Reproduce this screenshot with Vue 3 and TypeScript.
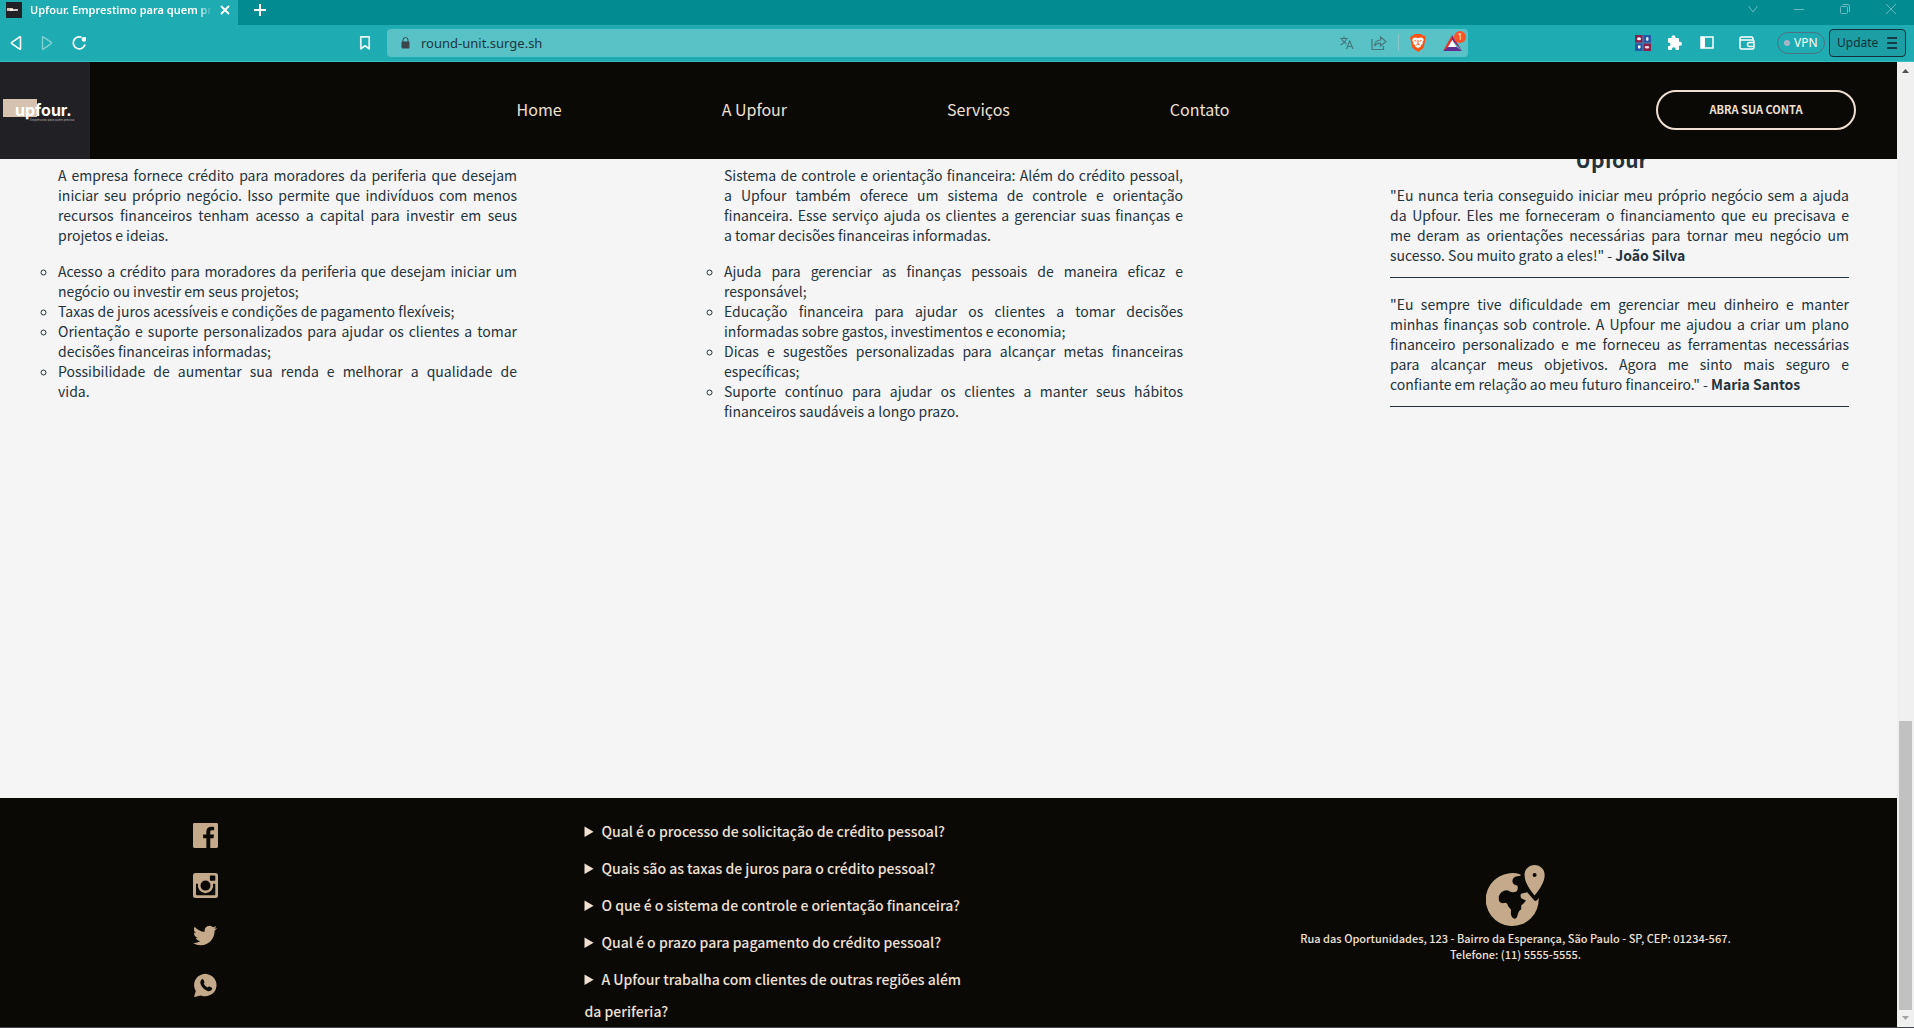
<script setup lang="ts">
const navLinks: string[] = ['Home', 'A Upfour', 'Serviços', 'Contato']

interface Service {
  intro: string
  items: string[]
}

// A "\n" marks a fixed line break; the line before it stays justified.
const services: Service[] = [
  {
    intro:
      'A empresa fornece crédito para moradores da periferia que desejam iniciar seu próprio negócio. Isso permite que indivíduos com menos recursos financeiros tenham acesso a capital para investir em seus projetos e ideias.',
    items: [
      'Acesso a crédito para moradores da periferia que desejam iniciar um negócio ou investir em seus projetos;',
      'Taxas de juros acessíveis e condições de pagamento flexíveis;',
      'Orientação e suporte personalizados para ajudar os clientes a tomar decisões financeiras informadas;',
      'Possibilidade de aumentar sua renda e melhorar a qualidade de\nvida.',
    ],
  },
  {
    intro:
      'Sistema de controle e orientação financeira: Além do crédito pessoal, a Upfour também oferece um sistema de controle e orientação financeira. Esse serviço ajuda os clientes a gerenciar suas finanças e\na tomar decisões financeiras informadas.',
    items: [
      'Ajuda para gerenciar as finanças pessoais de maneira eficaz e responsável;',
      'Educação financeira para ajudar os clientes a tomar decisões informadas sobre gastos, investimentos e economia;',
      'Dicas e sugestões personalizadas para alcançar metas financeiras específicas;',
      'Suporte contínuo para ajudar os clientes a manter seus hábitos financeiros saudáveis a longo prazo.',
    ],
  },
]

const testimonials = [
  {
    quote:
      '"Eu nunca teria conseguido iniciar meu próprio negócio sem a ajuda da Upfour. Eles me forneceram o financiamento que eu precisava e\nme deram as orientações necessárias para tornar meu negócio um sucesso. Sou muito grato a eles!"',
    author: 'João Silva',
  },
  {
    quote:
      '"Eu sempre tive dificuldade em gerenciar meu dinheiro e manter minhas finanças sob controle. A Upfour me ajudou a criar um plano financeiro personalizado e me forneceu as ferramentas necessárias para alcançar meus objetivos. Agora me sinto mais seguro e\nconfiante em relação ao meu futuro financeiro."',
    author: 'Maria Santos',
  },
]

const questions: string[] = [
  'Qual é o processo de solicitação de crédito pessoal?',
  'Quais são as taxas de juros para o crédito pessoal?',
  'O que é o sistema de controle e orientação financeira?',
  'Qual é o prazo para pagamento do crédito pessoal?',
  'A Upfour trabalha com clientes de outras regiões além da periferia?',
]

const lines = (text: string): string[] => text.split('\n')
</script>

<template>
  <div class="window">
    <div class="tabstrip">
      <div class="tab">
        <svg class="favicon" width="16" height="16" viewBox="0 0 16 16" aria-hidden="true">
          <rect width="16" height="16" fill="#212025" />
          <rect x="1" y="6" width="6" height="3" fill="#d9c6b2" />
          <path d="M4 8h8" stroke="#fff" stroke-width="1.500" />
        </svg>
        <span class="tab-title">Upfour. Emprestimo para quem precisa</span>
        <button class="icon-btn" aria-label="Fechar guia">
          <svg width="10" height="10" viewBox="0 0 10 10"><path d="M1 1l8 8M9 1l-8 8" stroke="#fff" stroke-width="1.800" /></svg>
        </button>
      </div>
      <button class="icon-btn new-tab" aria-label="Nova guia">
        <svg width="12" height="12" viewBox="0 0 12 12"><path d="M6 0v12M0 6h12" stroke="#fff" stroke-width="2" /></svg>
      </button>
      <div class="window-buttons">
        <button class="icon-btn" aria-label="Pesquisar guias">
          <svg width="10" height="10" viewBox="0 0 10 10"><path d="M.5 2L5 8l4.500-6" fill="none" stroke="#66bcc0" /></svg>
        </button>
        <button class="icon-btn" aria-label="Minimizar">
          <svg width="10" height="10" viewBox="0 0 10 10"><path d="M0 5.500h10" stroke="#66bcc0" /></svg>
        </button>
        <button class="icon-btn" aria-label="Restaurar">
          <svg width="10" height="10" viewBox="0 0 10 10" fill="none" stroke="#66bcc0"><rect x=".5" y="2.500" width="7" height="7" rx="1" /><path d="M2.500.5H8q1.500 0 1.500 1.500v6" /></svg>
        </button>
        <button class="icon-btn" aria-label="Fechar">
          <svg width="10" height="10" viewBox="0 0 10 10"><path d="M0 0l10 10M10 0L0 10" stroke="#66bcc0" /></svg>
        </button>
      </div>
    </div>

    <div class="toolbar">
      <div class="history">
        <button class="icon-btn" aria-label="Voltar">
          <svg width="14" height="16" viewBox="0 0 14 16"><path d="M11.500 2.200v11.600q0 .8-.8.3L2.800 8.600q-.8-.6 0-1.200l7.900-5.500q.8-.5.8.3z" fill="none" stroke="#fff" stroke-width="1.600" /></svg>
        </button>
        <button class="icon-btn" aria-label="Avançar">
          <svg width="14" height="16" viewBox="0 0 14 16"><path d="M2.500 2.200v11.600q0 .8.8.3l7.900-5.500q.8-.6 0-1.200L3.300 1.900q-.8-.5-.8.3z" fill="none" stroke="#7fd0d3" stroke-width="1.400" /></svg>
        </button>
        <button class="icon-btn" aria-label="Recarregar">
          <svg width="16" height="16" viewBox="0 0 16 16"><path d="M10.600 2.300A6 6 0 1 0 14 9.500" fill="none" stroke="#fff" stroke-width="1.700" /><path d="M11 3l3.500-.5v3.500h-3z" fill="#fff" stroke="#fff" stroke-linejoin="round" /></svg>
        </button>
      </div>
      <button class="icon-btn bookmark" aria-label="Favoritos">
        <svg width="12" height="16" viewBox="0 0 12 16"><path d="M1.800 1.800h8.400v12L6 10.800l-4.200 3z" fill="none" stroke="#e4f6f6" stroke-width="1.700" stroke-linejoin="round" /></svg>
      </button>
      <div class="address">
        <svg width="9" height="12" viewBox="0 0 9 12" aria-hidden="true"><path d="M2 5V3a2.500 2.500 0 0 1 5 0v2" fill="none" stroke="#3c474b" /><rect x=".5" y="4.500" width="8" height="7" rx="1" fill="#3c474b" /></svg>
        <input class="url" type="text" value="round-unit.surge.sh" aria-label="Endereço" />
        <button class="icon-btn" aria-label="Traduzir">
          <svg width="14" height="14" viewBox="0 0 14 14" fill="none" stroke="#44777b" stroke-width="1.100"><path d="M0 2.500h8M4 .5v2M1.500 2.500Q3 6.500 6.500 8M6.500 2.500Q5 7 .5 9M6.500 13l3.200-8 3.300 8M7.600 10.500h4.300" /></svg>
        </button>
        <button class="icon-btn" aria-label="Compartilhar">
          <svg width="16" height="16" viewBox="0 0 16 16" fill="none" stroke="#44777b" stroke-width="1.200"><path d="M1 4v10.500h11.500V11M3.500 11Q4 5.500 9.500 5V2L15 6.500 9.500 11V8Q5.500 8 3.500 11z" /></svg>
        </button>
        <span class="divider"></span>
        <button class="icon-btn" aria-label="Escudos">
          <svg width="16" height="18" viewBox="0 0 16 18"><path d="M4.500 0h7l1.500 1.700 1.500-.2L16 4l-.6 1.700L13.500 14 8 18l-5.500-4L.6 5.700 0 4l1.500-2.500 1.500.2z" fill="#fb5411" /><path d="M3.200 4l2-.6L8 4l2.800-.6 2 .6 1 2-1.300 2.500.2 1.500-2 1.300.3 1L8 14.200l-3-1.900.3-1-2-1.300.2-1.500L2.200 6z" fill="#fff" /><path d="M4.500 6.500l2 .7M11.500 6.500l-2 .7M8 6v4M6.300 11L8 10l1.700 1" stroke="#fb5411" fill="none" /></svg>
        </button>
        <button class="icon-btn rewards" aria-label="Recompensas">
          <svg width="19" height="16" viewBox="0 0 19 16"><path d="M9 0L0 16l9-5.500z" fill="#e0392b" /><path d="M9 0l10 16L9 5z" fill="#9e1f63" /><path d="M0 16h19l-6-4.500H6z" fill="#5e2f91" /><path d="M9.200 5l4.200 7H5z" fill="#fff" /></svg>
          <span class="badge">1</span>
        </button>
      </div>
      <div class="extensions">
        <button class="icon-btn ext-grid" aria-label="Extensão">
          <svg width="16" height="16" viewBox="0 0 16 16"><path d="M0 0h8v8H0z" fill="#87224f" /><path d="M8 0h8v8H8z" fill="#2459a5" /><path d="M0 8h8v8H0z" fill="#2459a5" /><path d="M8 8h8v8H8z" fill="#87224f" /><path d="M8 0v16M0 8h16" stroke="#4a86b0" /><ellipse cx="4" cy="3.800" rx="2" ry="1.500" fill="#fff" /><ellipse cx="12.300" cy="4" rx="1.300" ry="2" fill="#dfe9f4" /><path d="M3 10.500h2.500v2L4 14l-1-1.500z" fill="#fff" /><ellipse cx="12" cy="12.200" rx="2.300" ry="1.200" fill="#f3dce6" /></svg>
        </button>
        <button class="icon-btn ext-puzzle" aria-label="Extensões">
          <svg width="15" height="15" viewBox="0 0 15 15"><path d="M1 4q0-1 1-1h2.500v-.8a2 2 0 0 1 4 0V3H11q1 0 1 1v2.800h1a2 2 0 0 1 0 4h-1V14q0 1-1 1H8.700v-.8a1.900 1.900 0 0 0-3.800 0v.8H2q-1 0-1-1v-2.800h.6a1.900 1.900 0 0 0 0-3.800H1z" fill="#fff" /></svg>
        </button>
        <button class="icon-btn ext-panel" aria-label="Painel lateral">
          <svg width="14" height="13" viewBox="0 0 14 13"><rect x="1" y="1" width="12" height="11" fill="none" stroke="#fff" stroke-width="1.500" /><path d="M1 1h4v11H1z" fill="#fff" /></svg>
        </button>
        <button class="icon-btn ext-wallet" aria-label="Carteira">
          <svg width="16" height="14" viewBox="0 0 16 14" fill="none" stroke="#fff" stroke-width="1.500"><path d="M14 4V2.500Q14 1 12.500 1h-10Q1 1 1 2.500v9Q1 13 2.500 13h10.800q1.700 0 1.700-1.500v-6Q15 4 13.500 4H1" /><path d="M15 6.500h-4.500a2 2 0 0 0 0 4H15" /></svg>
        </button>
        <button class="vpn"><span class="vpn-dot"></span>VPN</button>
        <button class="update">
          Update
          <svg width="10" height="12" viewBox="0 0 10 12"><path d="M0 1h10M0 6h10M0 11h10" stroke="#143c46" stroke-width="2" /></svg>
        </button>
      </div>
    </div>

    <div class="viewport">
      <div class="page">
        <header class="site-header">
          <a class="logo" href="#" aria-label="upfour.">
            <svg width="90" height="97" viewBox="0 0 90 97">
              <rect x="3" y="37" width="34" height="18" fill="#d5c3b0" />
              <text x="15" y="54" class="logo-name">upfour.</text>
              <text x="30" y="59" class="logo-tag">Empréstimo para quem precisa</text>
            </svg>
          </a>
          <nav class="nav">
            <a v-for="link in navLinks" :key="link" href="#">{{ link }}</a>
          </nav>
          <button class="cta">ABRA SUA CONTA</button>
        </header>

        <main class="content">
          <article v-for="(service, i) in services" :key="i" class="service">
            <p><span v-for="line in lines(service.intro)" :key="line" class="line">{{ line }}</span></p>
            <ul>
              <li v-for="item in service.items" :key="item">
                <span v-for="line in lines(item)" :key="line" class="line">{{ line }}</span>
              </li>
            </ul>
          </article>
          <article class="testimonials">
            <h2>Upfour</h2>
            <p v-for="t in testimonials" :key="t.author">
              <span v-for="(line, n) in lines(t.quote)" :key="n" class="line">{{ line }}<template v-if="n === lines(t.quote).length - 1"> - <strong>{{ t.author }}</strong></template></span>
            </p>
          </article>
        </main>

        <footer class="site-footer">
          <div class="social">
            <a href="#" aria-label="Facebook">
              <svg width="25" height="25" viewBox="3 3 18 18"><path d="M20 3H4a1 1 0 0 0-1 1v16a1 1 0 0 0 1 1h8.615v-6.960h-2.338v-2.725h2.338v-2c0-2.325 1.420-3.592 3.500-3.592.699-.002 1.399.034 2.095.107v2.420h-1.435c-1.128 0-1.348.538-1.348 1.325v1.735h2.697l-.35 2.725h-2.348V21H20a1 1 0 0 0 1-1V4a1 1 0 0 0-1-1z" /></svg>
            </a>
            <a href="#" aria-label="Instagram">
              <svg width="25" height="25" viewBox="0 0 25 25"><path fill-rule="evenodd" d="M2.500 0h20Q25 0 25 2.500v20q0 2.500-2.500 2.500h-20Q0 25 0 22.500v-20Q0 0 2.500 0zM17.700 2.500q-.8 0-.8.800v3.600q0 .8.800.8h3.800q.8 0 .8-.8V3.300q0-.8-.8-.8zM3 10.800v10.400q0 1 1 1h17.300q1 0 1-1V10.800H20a7.700 7.700 0 1 1-15 0zM12.500 7.600a5 5 0 1 0 0 10 5 5 0 0 0 0-10z" /></svg>
            </a>
            <a href="#" aria-label="Twitter">
              <svg width="25" height="25" viewBox="0 0 25 24"><path d="M23.953 4.570a10 10 0 01-2.825.775 4.958 4.958 0 002.163-2.723c-.951.555-2.005.959-3.127 1.184a4.920 4.920 0 00-8.384 4.482C7.690 8.095 4.067 6.130 1.640 3.162a4.822 4.822 0 00-.666 2.475c0 1.710.870 3.213 2.188 4.096a4.904 4.904 0 01-2.228-.616v.060a4.923 4.923 0 003.946 4.827 4.996 4.996 0 01-2.212.085 4.936 4.936 0 004.604 3.417 9.867 9.867 0 01-6.102 2.105c-.390 0-.779-.023-1.170-.067a13.995 13.995 0 007.557 2.209c9.053 0 13.998-7.496 13.998-13.985 0-.210 0-.420-.015-.630A9.935 9.935 0 0024 4.590z" /></svg>
            </a>
            <a href="#" aria-label="WhatsApp">
              <svg width="25" height="25" viewBox="0 0 25 25"><path d="M1 24l1.800-6A11.200 11.200 0 1 1 8 22.400z" /><path d="M8.500 6.500q1.200-1.200 2 .2l1 2.200q.2.700-.8 1.800 1.300 2.600 3.900 3.900 1-1.400 1.800-1l2.200 1q1.200.7.200 2.100-1.600 2-4.300 1.200-5-1.500-7-6.800-.8-3 1-4.600z" fill="#0a0906" /></svg>
            </a>
          </div>
          <div class="faq">
            <details v-for="q in questions" :key="q">
              <summary>{{ q }}</summary>
            </details>
          </div>
          <address class="contact">
            <svg width="59" height="61" viewBox="617 74 176 182" aria-hidden="true">
              <path d="M720 102A79 79 0 1 0 774 172Q769 184 762 181L740 155L722 160Q718 164 722 173L736 180Q732 187 722 195L722 206Q712 212 712 220Q710 234 702 234Q692 232 691 218Q692 210 691 206L683 197Q682 188 675 187Q662 191 657 183C650 166 662 150 678 149Q686 149 689 154Q700 157 709 152Q714 142 710 135Q697 133 696 124C695 110 706 107 720 106z" />
              <path fill-rule="evenodd" d="M762 74c17 0 30 13 30 30 0 20-14 42-30 61-16-19-30-41-30-61 0-17 13-30 30-30zm0 24a6 6 0 1 0 0 12 6 6 0 0 0 0-12z" />
            </svg>
            <span>Rua das Oportunidades, 123 - Bairro da Esperança, São Paulo - SP, CEP: 01234-567.</span>
            <span>Telefone: (11) 5555-5555.</span>
          </address>
        </footer>
      </div>

      <div class="scrollbar" aria-hidden="true">
        <svg width="17" height="17" viewBox="0 0 17 17"><path d="M5 11h7L8.500 7z" fill="#505050" /></svg>
        <div class="track"><div class="thumb"></div></div>
        <svg width="17" height="17" viewBox="0 0 17 17"><path d="M5 6h7l-3.500 4z" fill="#a3a3a3" /></svg>
      </div>
    </div>
  </div>
</template>

<style>
body {
  background: #f5f5f5;
}
</style>

<style scoped>
* {
  box-sizing: border-box;
}

.window {
  display: flex;
  flex-direction: column;
  min-height: 100vh;
  font-family: 'Noto Sans CJK JP', 'Noto Sans', sans-serif;
  border-bottom: 1px solid #45454d;
}

button {
  font: inherit;
  cursor: pointer;
}

.icon-btn {
  display: flex;
  align-items: center;
  justify-content: center;
  padding: 0;
  border: 0;
  background: none;
}

svg {
  display: block;
  flex: none;
}

/* browser chrome */
.tabstrip {
  display: flex;
  align-items: flex-start;
  height: 25px;
  background: #028b91;
  font-family: 'Noto Sans', sans-serif;
}

.tab {
  display: flex;
  align-items: center;
  width: 238px;
  height: 25px;
  padding: 0 8px 5px 6px;
  background: #1eabb2;
}

.tab-title {
  flex: 1;
  margin: 0 8px;
  overflow: hidden;
  white-space: nowrap;
  font-size: 11px;
  font-weight: 600;
  line-height: 20px;
  color: #fff;
  mask-image: linear-gradient(to right, #000 168px, transparent 182px);
}

.new-tab {
  width: 44px;
  height: 20px;
}

.window-buttons {
  display: flex;
  gap: 36px;
  margin-left: auto;
  padding: 4px 18px 0 0;
}

.toolbar {
  display: flex;
  align-items: center;
  height: 37px;
  padding: 0 8px 1px 9px;
  background: #1eabb2;
  border-bottom: 1px solid #3cbcc1;
  font-family: 'Noto Sans', sans-serif;
  font-size: 12px;
}

.history {
  display: flex;
  gap: 17px;
}

.bookmark {
  margin-left: 272px;
}

.address {
  display: flex;
  align-items: center;
  flex: 1;
  height: 28px;
  margin: 0 167px 0 16px;
  padding: 0 6px 0 14px;
  border-radius: 4px;
  background: #58c2c6;
}

.url {
  flex: 1;
  min-width: 0;
  padding: 0 0 0 11px;
  border: 0;
  outline: 0;
  background: none;
  font: 13px 'Noto Sans', sans-serif;
  color: #1d3740;
}

.address .icon-btn {
  margin-left: 17px;
}

.divider {
  width: 1px;
  height: 17px;
  margin-left: 11px;
  background: #8cc4cb;
}

.address .divider + .icon-btn {
  margin-left: 11px;
}

.address .rewards {
  position: relative;
  margin-left: 17px;
}

.badge {
  position: absolute;
  top: -4px;
  right: -4px;
  width: 12px;
  height: 12px;
  border-radius: 6px;
  background: #fb542b;
  color: #fff;
  font-size: 8px;
  line-height: 12px;
  text-align: center;
}

.extensions {
  display: flex;
  align-items: center;
}

.ext-puzzle {
  margin-left: 16px;
}

.ext-panel {
  margin-left: 18px;
}

.ext-wallet {
  margin: 0 22px 0 25px;
}

.vpn {
  display: flex;
  align-items: center;
  gap: 4px;
  width: 48px;
  height: 22px;
  padding: 0 0 0 6px;
  border: 1px solid #4b7285;
  border-radius: 11px;
  background: none;
  color: #fff;
}

.vpn-dot {
  width: 6px;
  height: 6px;
  border-radius: 3px;
  background: #aab4c8;
}

.update {
  display: flex;
  align-items: center;
  justify-content: space-between;
  width: 77px;
  height: 28px;
  margin-left: 4px;
  padding: 0 8px 0 7px;
  border: 1px solid #12303a;
  border-radius: 4px;
  background: #1d9ea5;
  color: #12303a;
}

/* site */
.viewport {
  display: flex;
  flex: 1;
}

.page {
  display: flex;
  flex-direction: column;
  flex: 1;
  min-width: 0;
  background: #f5f5f5;
}

.site-header {
  display: flex;
  align-items: center;
  justify-content: space-between;
  padding-right: 41px;
  background: #0a0906;
}

.logo {
  background: #212025;
}

.logo-name {
  font: 700 16px Inter, sans-serif;
  fill: #fff;
}

.logo-tag {
  font: 3px Inter, sans-serif;
  fill: #b9b4b0;
}

.nav {
  display: flex;
  gap: 160px;
  padding-bottom: 4px;
}

.nav a {
  color: #efe0d2;
  font-size: 16px;
  line-height: 24px;
  text-decoration: none;
}

.cta {
  width: 200px;
  height: 40px;
  margin-bottom: 2px;
  padding: 0 0 2px;
  border: 2px solid #efe0d2;
  border-radius: 20px;
  background: transparent;
  color: #efe0d2;
  font-size: 11px;
  font-weight: 700;
}

.content {
  display: grid;
  grid-template-columns: repeat(3, 1fr);
  gap: 207px;
  flex: 1;
  padding: 6px 48px 0 58px;
  overflow: hidden;
  color: #24323c;
  font-size: 14px;
  line-height: 20px;
  text-align: justify;
}

.content p {
  margin: 0 0 16px;
}

.content ul {
  margin: 0;
  padding: 0;
  list-style: circle;
}

.line {
  display: block;
}

.line:not(:last-child) {
  text-align-last: justify;
}

.testimonials h2 {
  margin: -20px 0 12px;
  padding-right: 16px;
  font-size: 21px;
  line-height: 28px;
  text-align: center;
}

.testimonials p {
  padding-bottom: 12px;
  border-bottom: 1px solid #24323c;
}

.site-footer {
  display: grid;
  grid-template-columns: 411fr 727fr 759fr;
  background: #0a0906;
  color: #efe0d2;
}

.social {
  display: flex;
  flex-direction: column;
  align-items: center;
  gap: 25px;
  padding-top: 25px;
}

.social svg,
.contact svg {
  fill: #c4aa8b;
}

.faq {
  display: flex;
  flex-direction: column;
  gap: 4px;
  width: 380px;
  margin: 0 auto;
  padding-top: 16px;
  font-size: 14px;
  font-weight: 500;
  line-height: 32px;
}

.faq summary::marker {
  font-size: 16px;
}

.contact {
  display: flex;
  flex-direction: column;
  align-items: center;
  justify-content: center;
  padding: 2px 4px 0 0;
  font-size: 11px;
  font-style: normal;
  font-weight: 500;
  line-height: 16px;
}

.contact svg {
  margin-bottom: 4px;
}

.scrollbar {
  display: flex;
  flex-direction: column;
  width: 17px;
  background: #f0f0f0;
}

.track {
  display: flex;
  flex-direction: column;
  justify-content: flex-end;
  flex: 1;
  padding: 0 2px;
}

.thumb {
  height: 31%;
  background: #c1c1c1;
}
</style>
